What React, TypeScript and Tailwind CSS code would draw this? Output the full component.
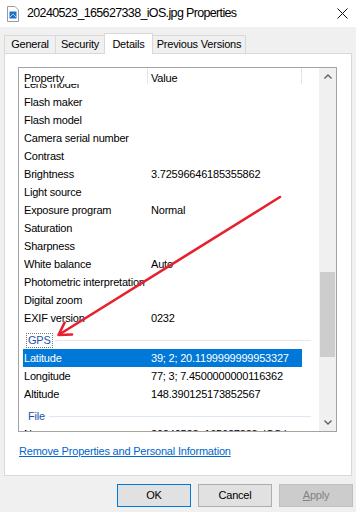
import React from "react";

type Row = { p: string; v?: string; sel?: boolean };

const exifRows: Row[] = [
  { p: "Lens model" },
  { p: "Flash maker" },
  { p: "Flash model" },
  { p: "Camera serial number" },
  { p: "Contrast" },
  { p: "Brightness", v: "3.72596646185355862" },
  { p: "Light source" },
  { p: "Exposure program", v: "Normal" },
  { p: "Saturation" },
  { p: "Sharpness" },
  { p: "White balance", v: "Auto" },
  { p: "Photometric interpretation" },
  { p: "Digital zoom" },
  { p: "EXIF version", v: "0232" },
];

const gpsRows: Row[] = [
  { p: "Latitude", v: "39; 2; 20.1199999999953327", sel: true },
  { p: "Longitude", v: "77; 3; 7.4500000000116362" },
  { p: "Altitude", v: "148.390125173852567" },
];

function ListRow({ r }: { r: Row }) {
  return (
    <div
      className={
        "flex h-[18px] items-center ml-[4px] w-[279px] pl-[1px] whitespace-nowrap " +
        (r.sel ? "bg-[#0078d7] text-white" : "text-black")
      }
    >
      <div className="w-[127px] overflow-hidden">{r.p}</div>
      <div className="flex-1 overflow-hidden">{r.v ?? ""}</div>
    </div>
  );
}

function GroupHeader({ label, focus }: { label: string; focus?: boolean }) {
  return (
    <div className="h-[22px] pt-[4px] flex items-center">
      <div className="ml-[7px] w-[285px] h-[18px] flex items-center">
        <span
          className={
            "px-[1px] leading-[13px] text-[#1f4fa8] border " +
            (focus ? "border-dotted border-[#7a7a7a]" : "border-transparent")
          }
        >
          {label}
        </span>
        <div className="flex-1 h-px bg-[#dfe7f2] ml-[2px]" />
      </div>
    </div>
  );
}

export default function App() {
  return (
    <div
      className="relative w-[356px] h-[512px] bg-[#f0f0f0] overflow-hidden text-[11px] tracking-[-0.2px] text-black"
      style={{ fontFamily: '"Liberation Sans", Arial, sans-serif' }}
    >
      {/* Title bar */}
      <div className="h-[27px] bg-white flex items-center">
        <svg width="14" height="16" viewBox="0 0 14 16" className="ml-[6px] mr-[7px]">
          <path d="M1.5 0.5 H9 L12.5 4 V15.5 H1.5 Z" fill="#fff" stroke="#9a9a9a" />
          <rect x="3.5" y="5.5" width="7" height="7" fill="#1e6fc8" />
          <path d="M4 11 L7 8 L10 11" fill="none" stroke="#9fd0ff" strokeWidth="1" />
        </svg>
        <span className="text-[12.5px] tracking-[-0.65px] text-black">20240523_165627338_iOS.jpg Properties</span>
        <div className="flex-1" />
        <svg width="11" height="11" viewBox="0 0 11 11" className="mr-[8px]">
          <path d="M0.5 0.5 L10.5 10.5 M10.5 0.5 L0.5 10.5" stroke="#111" strokeWidth="1" />
        </svg>
      </div>

      {/* Tabs */}
      <div className="h-[26px] flex items-end pl-[4px] relative z-10">
        <div className="h-[18px] w-[52px] flex items-center justify-center border-t border-l border-r border-[#d9d9d9] bg-[#f0f0f0]">General</div>
        <div className="h-[18px] w-[50px] -ml-px flex items-center justify-center border-t border-l border-r border-[#d9d9d9] bg-[#f0f0f0]">Security</div>
        <div className="h-[21px] w-[49px] -ml-px -mb-px flex items-center justify-center border-t border-l border-r border-[#d9d9d9] bg-white">Details</div>
        <div className="h-[18px] w-[94px] -ml-px flex items-center justify-center border-t border-l border-r border-[#d9d9d9] bg-[#f0f0f0]">Previous Versions</div>
      </div>

      {/* Panel */}
      <div className="ml-[4px] w-[348px] h-[423px] bg-white border border-[#d9d9d9] pt-[13px] pl-[13px]">
        {/* List view */}
        <div className="w-[319px] h-[365px] border border-[#a3a3a3] flex bg-white">
          <div className="w-[300px] flex flex-col">
            <div className="h-[16px] flex items-stretch relative shrink-0">
              <div className="pl-[5px] w-[128px] pt-[2px]">Property</div>
              <div className="w-px h-full bg-[#e5e5e5]" />
              <div className="pl-[3px] w-[153px] pt-[2px]">Value</div>
              <div className="w-px h-full bg-[#e5e5e5]" />
            </div>
            <div className="flex-1 overflow-hidden">
              <div className="-mt-[9px]">
                {exifRows.map((r) => (
                  <ListRow key={r.p} r={r} />
                ))}
                <GroupHeader label="GPS" focus />
                {gpsRows.map((r) => (
                  <ListRow key={r.p} r={r} />
                ))}
                <GroupHeader label="File" />
                <ListRow r={{ p: "Name", v: "20240523_165627338_iOS.jpg" }} />
              </div>
            </div>
          </div>
          {/* Scrollbar */}
          <div className="w-[17px] bg-[#f0f0f0] flex flex-col">
            <div className="h-[17px] flex items-center justify-center shrink-0">
              <svg width="8" height="5" viewBox="0 0 8 5">
                <path d="M0.5 4.5 L4 1 L7.5 4.5" fill="none" stroke="#606060" strokeWidth="1.4" />
              </svg>
            </div>
            <div className="flex-1 relative">
              <div className="h-[187px]" />
              <div className="mx-[1px] h-[85px] bg-[#cdcdcd]" />
            </div>
            <div className="h-[17px] flex items-center justify-center shrink-0">
              <svg width="8" height="5" viewBox="0 0 8 5">
                <path d="M0.5 0.5 L4 4 L7.5 0.5" fill="none" stroke="#606060" strokeWidth="1.4" />
              </svg>
            </div>
          </div>
        </div>
        <div className="mt-[12px] ml-px text-[#0066cc] underline leading-[14px]">
          Remove Properties and Personal Information
        </div>
      </div>

      {/* Buttons */}
      <div className="mt-[8px] flex justify-end gap-[7px] pr-[3px]">
        <div className="w-[74px] h-[23px] flex items-center justify-center bg-[#e1e1e1] border border-[#0078d7]">OK</div>
        <div className="w-[74px] h-[23px] flex items-center justify-center bg-[#e1e1e1] border border-[#adadad]">Cancel</div>
        <div className="w-[74px] h-[23px] flex items-center justify-center bg-[#cccccc] border border-[#bfbfbf] text-[#838383]">
          <span className="underline">A</span>pply
        </div>
      </div>

      {/* Red annotation arrow */}
      <svg className="absolute left-0 top-0 pointer-events-none" width="356" height="512" viewBox="0 0 356 512">
        <line x1="280" y1="197" x2="60" y2="334" stroke="#e8202e" strokeWidth="2.6" strokeLinecap="round" />
        <polyline points="72,334.5 58.5,335 64.6,322.6" fill="none" stroke="#e8202e" strokeWidth="2.6" strokeLinecap="round" strokeLinejoin="round" />
      </svg>
    </div>
  );
}
